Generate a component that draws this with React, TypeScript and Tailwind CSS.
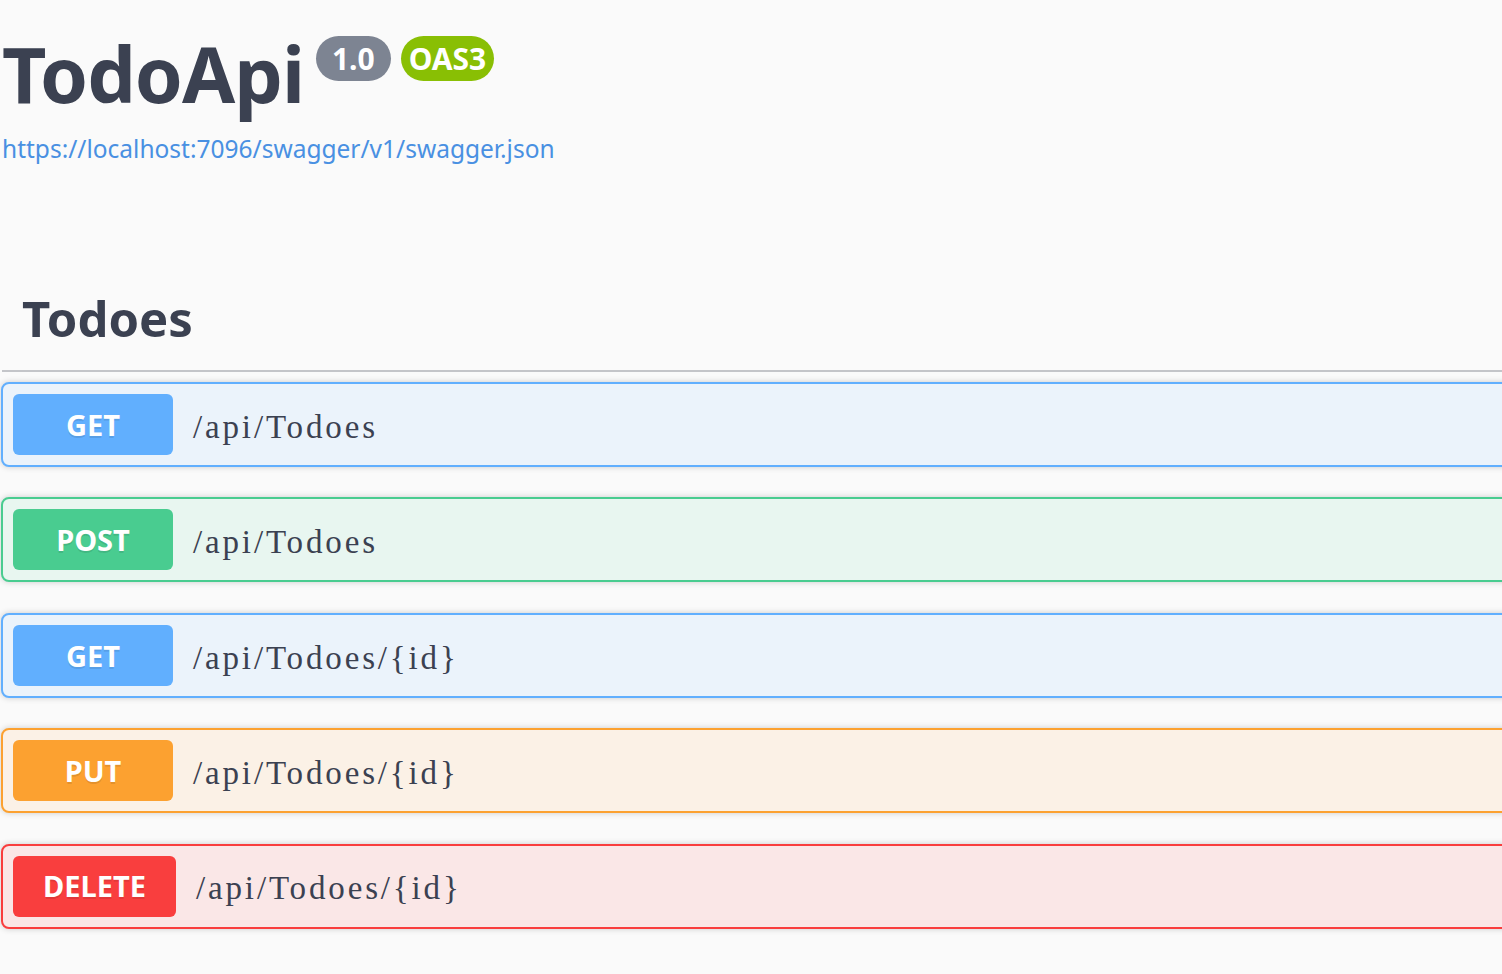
const rows = [
  { method: "GET", path: "/api/Todoes", badge: "bg-[#61affe]", box: "border-[#61affe] bg-[#ebf3fb]", w: "w-[160px]" },
  { method: "POST", path: "/api/Todoes", badge: "bg-[#49cc90]", box: "border-[#49cc90] bg-[#e8f6f0]", w: "w-[160px]" },
  { method: "GET", path: "/api/Todoes/{id}", badge: "bg-[#61affe]", box: "border-[#61affe] bg-[#ebf3fb]", w: "w-[160px]" },
  { method: "PUT", path: "/api/Todoes/{id}", badge: "bg-[#fca130]", box: "border-[#fca130] bg-[#fbf1e6]", w: "w-[160px]" },
  { method: "DELETE", path: "/api/Todoes/{id}", badge: "bg-[#f93e3e]", box: "border-[#f93e3e] bg-[#fae7e7]", w: "w-[163px]" },
];

export default function App() {
  return (
    <div className="h-[974px] w-full overflow-hidden bg-[#fafafa] font-['Noto_Sans',sans-serif] text-[#3b4151]">
      {/* Info header */}
      <div className="pl-[2px] pt-[28px]">
        <div className="flex items-start">
          <h1 className="text-[77px] font-bold leading-[92px] tracking-[-1px]">TodoApi</h1>
          <span className="ml-[12px] mt-[8px] flex h-[45px] items-center rounded-full bg-[#7d8492] px-[16px] text-[30px] font-bold text-white">
            1.0
          </span>
          <span className="ml-[10px] mt-[8px] flex h-[45px] items-center rounded-full bg-[#89bf04] px-[8px] text-[30px] font-bold text-white">
            OAS3
          </span>
        </div>
        <a className="mt-[11px] block text-[24.5px] leading-[36px] text-[#4990e2]">
          https://localhost:7096/swagger/v1/swagger.json
        </a>
      </div>

      {/* Tag section */}
      <div className="mt-[115px]">
        <h2 className="flex h-[88px] items-center pb-[14px] pl-[22px] text-[49px] font-bold">Todoes</h2>
        <div className="ml-[2px] h-[2px] bg-[#c4c5c9]" />
        <div className="mt-[10px] w-[1560px] pl-[1px]">
          {rows.map((r, i) => (
            <div
              key={i}
              className={`mb-[30.4px] flex h-[85px] items-center rounded-[8px] border-2 p-[10px] shadow-[0_0_6px_rgba(0,0,0,0.19)] ${r.box}`}
            >
              <span
                className={`flex h-[61px] items-center justify-center rounded-[6px] text-[29px] font-bold text-white [text-shadow:0_2px_0_rgba(0,0,0,0.1)] ${r.badge} ${r.w}`}
              >
                {r.method}
              </span>
              <span className="ml-[20px] mt-[6px] font-['Liberation_Serif',serif] text-[33px] tracking-[2.85px] text-[#3b4151]">
                {r.path}
              </span>
            </div>
          ))}
        </div>
      </div>
    </div>
  );
}
